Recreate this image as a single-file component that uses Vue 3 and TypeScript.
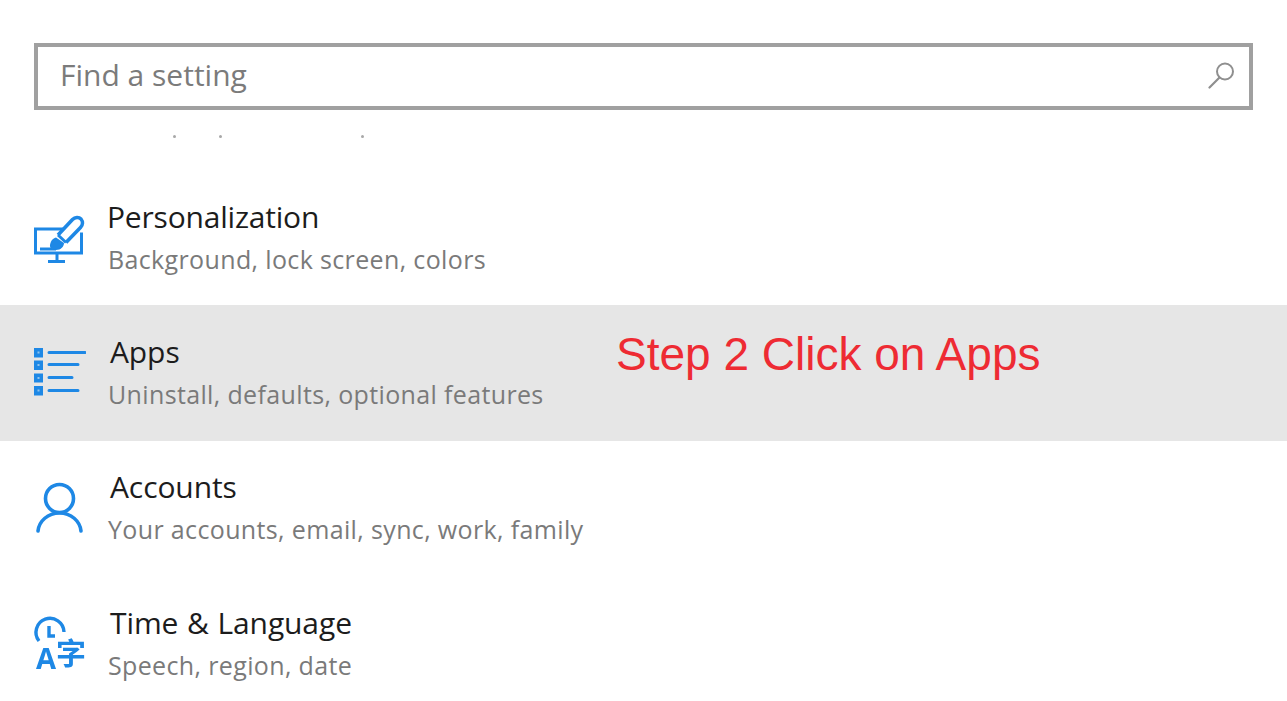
<script setup lang="ts">
interface Row {
  key: string;
  title: string;
  sub: string;
  active?: boolean;
}
const rows: Row[] = [
  { key: 'personalization', title: 'Personalization', sub: 'Background, lock screen, colors' },
  { key: 'apps', title: 'Apps', sub: 'Uninstall, defaults, optional features', active: true },
  { key: 'accounts', title: 'Accounts', sub: 'Your accounts, email, sync, work, family' },
  { key: 'time', title: 'Time & Language', sub: 'Speech, region, date' },
];
</script>

<template>
  <div class="page">
    <div class="search">
      <span class="placeholder">Find a setting</span>
      <svg class="search-icon" viewBox="0 0 30 30" fill="none" stroke="#8f8f8f" stroke-width="2">
        <circle cx="18" cy="11.5" r="8" />
        <path d="M12.5 17.5 L2.5 27.5" stroke-linecap="round" stroke-width="2.2" />
      </svg>
    </div>
    <div class="specks"><i></i><i></i><i></i></div>
    <ul class="list">
      <li v-for="row in rows" :key="row.key" class="row" :class="[row.key, { active: row.active }]">
        <svg class="icon" viewBox="0 -6 54 66" fill="none" stroke="#1e88e5" stroke-width="3">
          <template v-if="row.key === 'personalization'">
            <path d="M31 18 H3.5 V42 H49.5 V21.5" />
            <path d="M25 42 V50.5 M16 50.5 H33" />
            <path d="M8 38 H24" />
            <path d="M26 24 L40.5 8.5 C43 6 47 6 49 8 C51 10.5 51 14 48.5 16.5 L34 31.5" stroke-linejoin="round" stroke-width="3.6" />
            <path d="M26 24 L34 31.5" stroke-width="3" />
            <path d="M24 26.5 C20 27.5 18.5 31 18 34 C17.5 37 20 39 24 39 C29 39 32 35.5 32 32 Z" fill="#1e88e5" stroke="none" />
          </template>
          <template v-else-if="row.key === 'apps'">
            <g fill="#1e88e5" stroke="none">
              <rect x="2" y="2" width="9" height="9.5" />
              <rect x="2" y="14.5" width="9" height="9.5" />
              <rect x="2" y="27.5" width="9" height="9" />
              <rect x="2" y="40" width="9" height="9.5" />
            </g>
            <g fill="#8fc3ee" stroke="none">
              <rect x="5.5" y="5.5" width="2" height="2" />
              <rect x="5.5" y="18" width="2" height="2" />
              <rect x="5.5" y="31" width="2" height="2" />
              <rect x="5.5" y="43.5" width="2" height="2" />
            </g>
            <path d="M17 6.5 H53 M17 18.5 H46 M17 31.5 H40 M17 44.5 H46" stroke-linecap="round" />
          </template>
          <template v-else-if="row.key === 'accounts'">
            <circle cx="27.5" cy="17.5" r="14" stroke-width="3.6" />
            <path d="M6 50 C7 40 16 32 27.5 32 S48 40 49 50" stroke-width="3.6" stroke-linecap="round" />
          </template>
          <template v-else>
            <path d="M7 24 A14 14 0 1 1 32 15" stroke-width="3.4" />
            <path d="M17 9 V19 H23" stroke-width="3.4" />
            <text x="4" y="51.5" class="a-glyph">A</text>
            <text x="24" y="46.5" class="zi-glyph">字</text>
          </template>
        </svg>
        <div class="texts">
          <div class="title">{{ row.title }}</div>
          <div class="sub">{{ row.sub }}</div>
        </div>
        <span v-if="row.active" class="note">Step 2 Click on Apps</span>
      </li>
    </ul>
  </div>
</template>

<style>
html, body { margin: 0; background: #fff; }
</style>

<style scoped>
.page {
  height: 701px;
  width: 1287px;
  overflow: hidden;
  background: #fff;
  font-family: "Open Sans", "Noto Sans", sans-serif;
  padding-top: 43px;
  box-sizing: border-box;
}
.search {
  margin: 0 34px;
  height: 67px;
  box-sizing: border-box;
  border: 4px solid #a0a0a0;
  display: flex;
  align-items: center;
  justify-content: space-between;
  padding: 0 12px 0 22px;
}
.placeholder { font-size: 30px; line-height: 40px; color: #7b7b7b; margin-bottom: 4px; }
.search-icon { width: 30px; height: 30px; margin-bottom: 3px; filter: blur(0.3px); }
.specks {
  height: 60px;
  display: flex;
  padding: 25px 0 0 173px;
  box-sizing: border-box;
  gap: 43px;
}
.specks i { width: 3px; height: 3px; border-radius: 50%; background: #a8a8a8; display: block; }
.specks i:last-child { margin-left: 96px; }
.list { list-style: none; margin: 0; padding: 0; }
.row {
  position: relative;
  height: 135.3px;
  display: flex;
  align-items: center;
  padding-left: 32px;
  gap: 22px;
}
.row.active { background: #e6e6e6; }
.icon { width: 54px; height: 66px; flex: none; filter: blur(0.4px); }
.a-glyph { font: 700 29px "Open Sans", sans-serif; fill: #1e88e5; stroke: none; }
.zi-glyph { font: 700 30px "Noto Sans CJK SC", sans-serif; fill: #1e88e5; stroke: none; }
.texts { display: flex; flex-direction: column; gap: 7px; padding-bottom: 1px; }
.title { font-size: 30px; line-height: 36px; color: #1c1c1c; letter-spacing: -0.1px; word-spacing: 1px; margin-left: 2px; }
.personalization .title { margin-left: -1px; letter-spacing: -0.2px; }
.sub { font-size: 25px; line-height: 34px; color: #7a7a7a; letter-spacing: 0.36px; }
.note {
  position: absolute;
  left: 616px;
  top: 21px;
  font-family: "Liberation Sans", Arial, sans-serif;
  font-size: 46px;
  line-height: 56px;
  color: #ee2b33;
  white-space: nowrap;
}
</style>
